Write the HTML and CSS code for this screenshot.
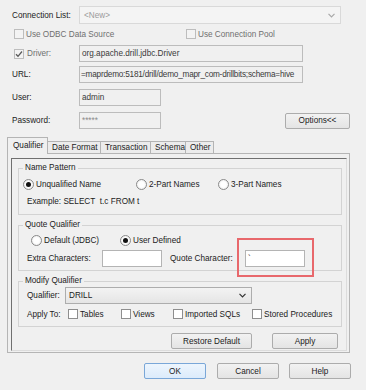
FILE: index.html
```html
<!DOCTYPE html>
<html>
<head>
<meta charset="utf-8">
<link rel="stylesheet" href="styles.css">
</head>
<body>
<div class="dlg">
  <div class="top">
    <div class="row conn">
      <span class="lbl">Connection List:</span>
      <div class="combo dis"><span class="val">&lt;New&gt;</span><svg class="chev light" width="7" height="5" viewBox="0 0 7 5"><path d="M0.5 0.8L3.5 3.8L6.5 0.8"/></svg></div>
    </div>
    <div class="row chkrow">
      <label class="chk dis odbc"><span class="box"></span>Use ODBC Data Source</label>
      <label class="chk dis"><span class="box"></span>Use Connection Pool</label>
    </div>
    <div class="row frow drv">
      <label class="chk dis drvlbl"><span class="box"><svg width="8" height="8" viewBox="0 0 8 8"><path d="M1 4.2L3 6.3L7 1.5"/></svg></span>Driver:</label>
      <div class="field ro long">org.apache.drill.jdbc.Driver</div>
    </div>
    <div class="row frow url">
      <span class="lbl">URL:</span>
      <div class="field ro long urlval">=maprdemo:5181/drill/demo_mapr_com-drillbits;schema=hive</div>
    </div>
    <div class="row frow user">
      <span class="lbl">User:</span>
      <div class="field ro short">admin</div>
    </div>
    <div class="row frow pass">
      <span class="lbl">Password:</span>
      <div class="field ro short pw">*****</div>
      <div class="btn opt">Options&lt;&lt;</div>
    </div>
  </div>

  <div class="tabs">
    <div class="tab sel t1">Qualifier</div>
    <div class="tab t2">Date Format</div>
    <div class="tab t3">Transaction</div>
    <div class="tab t4">Schema</div>
    <div class="tab t5">Other</div>
  </div>

  <div class="panel">
    <div class="inner">
      <fieldset class="grp g1">
        <legend>Name Pattern</legend>
        <div class="row opts">
          <span class="rad on w1"><span class="dot"></span>Unqualified Name</span>
          <span class="rad w2"><span class="dot"></span>2-Part Names</span>
          <span class="rad"><span class="dot"></span>3-Part Names</span>
        </div>
        <div class="example">Example: SELECT&nbsp; t.c FROM t</div>
      </fieldset>

      <fieldset class="grp g2">
        <legend>Quote Qualifier</legend>
        <div class="row opts2">
          <span class="rad w3"><span class="dot"></span>Default (JDBC)</span>
          <span class="rad on"><span class="dot"></span>User Defined</span>
        </div>
        <div class="row extra">
          <span class="elbl">Extra Characters:</span>
          <div class="field edit"></div>
          <span class="elbl qlbl">Quote Character:</span>
          <div class="field edit">`</div>
        </div>
      </fieldset>

      <fieldset class="grp g3">
        <legend>Modify Qualifier</legend>
        <div class="row qrow">
          <span class="qlabel">Qualifier:</span>
          <div class="combo q"><span class="val">DRILL</span><svg class="chev" width="7" height="5" viewBox="0 0 7 5"><path d="M0.5 0.8L3.5 3.8L6.5 0.8"/></svg></div>
        </div>
        <div class="row apply">
          <span class="alabel">Apply To:</span>
          <label class="chk c1"><span class="box"></span>Tables</label>
          <label class="chk c2"><span class="box"></span>Views</label>
          <label class="chk c3"><span class="box"></span>Imported SQLs</label>
          <label class="chk"><span class="box"></span>Stored Procedures</label>
        </div>
      </fieldset>

      <div class="row pbtns">
        <div class="btn restore">Restore Default</div>
        <div class="btn applyb">Apply</div>
      </div>
    </div>
  </div>

  <div class="row dbtns">
    <div class="btn def">OK</div>
    <div class="btn">Cancel</div>
    <div class="btn">Help</div>
  </div>

  <div class="mark"></div>
</div>
</body>
</html>
```

FILE: styles.css
```css
* { box-sizing: border-box; }
html, body { margin: 0; padding: 0; background: #f0f0f0; }
body {
  font-family: "Liberation Sans", Arial, sans-serif;
  font-size: 8.2px;
  color: #1b1b1b;
}
.dlg { position: relative; width: 366px; height: 390px; overflow: hidden; }
.row { display: flex; align-items: center; }

/* top section */
.top { padding: 6px 16px 0 12px; }
.lbl { width: 67px; flex: none; }
.conn { height: 18px; }
.chkrow { height: 12px; margin-top: 4px; }
.drv { height: 17px; margin-top: 5px; }
.url { height: 17px; margin-top: 4px; }
.user { height: 17px; margin-top: 6px; }
.pass { height: 17px; margin-top: 6px; }

.combo {
  display: flex; align-items: center; justify-content: space-between;
  height: 18px; padding: 0 5px 0 4px; flex: none;
}
.combo.dis { width: 262px; background: #f4f4f4; border: 1px solid #d9d9d9; color: #9b9b9b; }
.chev path { fill: none; stroke: #333; stroke-width: 1.2; }
.chev.light path { stroke: #a8a8a8; }

.chk { display: flex; align-items: center; flex: none; white-space: nowrap; }
.box {
  width: 10px; height: 10px; flex: none; margin-right: 2px;
  border: 1px solid #8e8e8e; background: #fff;
  display: flex; align-items: center; justify-content: center;
}
.chk.dis { color: #6f6f6f; }
.chk.dis .box { border-color: #bdbdbd; background: #f3f3f3; }
.box svg path { fill: none; stroke: #5a5a5a; stroke-width: 1.3; }
.odbc { margin-left: 2px; width: 172px; }
.drvlbl { margin-left: 2px; width: 65px; }
.drvlbl .box { margin-right: 3px; }

.field {
  height: 17px; flex: none; border: 1px solid #bcbcbc;
  padding: 0 2px; display: flex; align-items: center;
  white-space: nowrap; overflow: hidden;
}
.field.ro { background: #f0f0f0; color: #3a3a3a; }
.field.long { width: 224px; }
.field.urlval { padding: 0 1px; letter-spacing: -0.2px; }
.field.short { width: 82px; }
.field.pw { color: #8a8a8a; }
.field.edit { width: 60px; background: #fff; border-color: #b4b4b4; }

.btn {
  height: 16px; flex: none;
  display: flex; align-items: center; justify-content: center;
  border: 1px solid #acacac; border-radius: 2px;
  background: linear-gradient(#f2f2f2, #e4e4e4);
  color: #1b1b1b;
}
.opt { margin-left: auto; width: 65px; }

/* tabs */
.tabs {
  position: relative; z-index: 1;
  display: flex; align-items: flex-end;
  height: 16px; margin: 8px 0 0 7px;
}
.tab {
  height: 12px; padding-left: 4px;
  display: flex; align-items: center;
  border-top: 1px solid #b4b4b4; border-right: 1px solid #b4b4b4;
  background: #ececec; white-space: nowrap;
}
.tab.sel {
  height: 17px; margin-bottom: -1px; padding: 0 0 2px 5px;
  border-left: 1px solid #b4b4b4; background: #f0f0f0;
}
.t1 { width: 41px; }
.t2 { width: 53px; }
.t3 { width: 50px; }
.t4 { width: 35px; }
.t5 { width: 28px; }

/* panel */
.panel {
  margin-left: 7px; width: 343px; height: 200px;
  border: 1px solid #b5b5b5; padding: 4px 2px 1px 3px;
}
.inner {
  height: 100%;
  border: 1px solid; border-color: #707070 #dcdcdc #dcdcdc #707070;
  padding: 4px 4px 0 6px;
}
.grp {
  margin: 0; min-width: 0;
  border: 1px solid #d3d3d3; padding: 0 0 0 4px;
}
.grp legend { padding: 0 2px; line-height: 10px; height: 10px; }
.g1 { padding-bottom: 6px; }
.g2 { margin-top: 5px; padding-bottom: 3px; }
.g3 { margin-top: 5px; padding-bottom: 6px; }

.rad { display: flex; align-items: center; height: 14px; flex: none; white-space: nowrap; }
.rad .dot {
  width: 11px; height: 11px; border-radius: 50%; margin-right: 2px;
  border: 1px solid #8a8a8a; background: radial-gradient(#ffffff 40%, #e4e4e4);
  display: flex; align-items: center; justify-content: center;
}
.rad.on .dot::after { content: ""; width: 5px; height: 5px; border-radius: 50%; background: #111; }
.opts { height: 14px; margin-top: 4px; }
.w1 { width: 113px; }
.w2 { width: 82px; }
.example { height: 12px; line-height: 12px; margin: 5px 0 0 4px; }

.opts2 { height: 14px; margin-top: 3px; padding-left: 8px; }
.w3 { width: 89px; }
.extra { height: 17px; margin-top: 3px; padding-left: 4px; }
.elbl { width: 75px; flex: none; }
.qlbl { margin-left: 8px; }

.qrow { height: 17px; margin-top: 1px; padding-left: 4px; }
.qlabel { width: 38px; flex: none; }
.combo.q {
  width: 187px; height: 17px;
  background: linear-gradient(#f3f3f3, #e5e5e5); border: 1px solid #adadad;
  color: #1b1b1b; padding: 0 5px 0 3px;
}
.apply { height: 12px; margin-top: 4px; padding-left: 4px; }
.alabel { width: 41px; flex: none; }
.c1 { width: 53px; }
.c2 { width: 52px; }
.c3 { width: 79px; }

.pbtns { justify-content: flex-end; margin-top: 6px; padding-right: 4px; }
.restore { width: 81px; }
.applyb { width: 66px; margin-left: 20px; }

/* dialog buttons */
.dbtns { margin-top: 10px; padding-left: 144px; }
.dbtns .btn { width: 62px; margin-right: 11px; }
.dbtns .btn:nth-child(3) { margin-left: -1px; }
.btn.def { border-color: #7aa7d8; background: linear-gradient(#edf5fd, #dcebfb); }

/* annotation overlay */
.mark {
  position: absolute; left: 237px; top: 238px;
  width: 77px; height: 39px;
  border: 2px solid #e8686c;
}
```
